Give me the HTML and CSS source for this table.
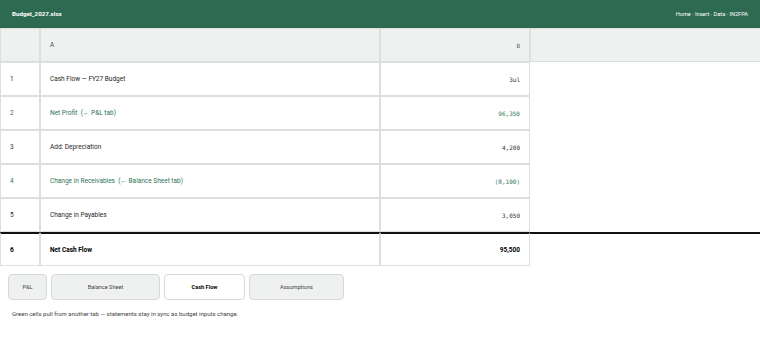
FILE: index.html
```html
<!DOCTYPE html>
<html>
<head>
<meta charset="utf-8">
<link rel="stylesheet" href="styles.css">
</head>
<body>
<header class="topbar">
  <span class="file">Budget_2027.xlsx</span>
  <span class="menu">Home · Insert · Data · IN2FPA</span>
</header>
<div class="sheet">
  <div class="cell head"></div>
  <div class="cell head txt">A</div>
  <div class="cell head num">B</div>
  <div class="cell head fill"></div>

  <div class="cell rn">1</div>
  <div class="cell txt">Cash Flow — FY27 Budget</div>
  <div class="cell num">3ul</div>
  <div class="blank"></div>

  <div class="cell rn link">2</div>
  <div class="cell txt link">Net Profit &nbsp;(← P&amp;L tab)</div>
  <div class="cell num link">96,350</div>
  <div class="blank"></div>

  <div class="cell rn">3</div>
  <div class="cell txt">Add: Depreciation</div>
  <div class="cell num">4,200</div>
  <div class="blank"></div>

  <div class="cell rn link">4</div>
  <div class="cell txt link">Change in Receivables &nbsp;(← Balance Sheet tab)</div>
  <div class="cell num link">(8,100)</div>
  <div class="blank"></div>

  <div class="cell rn">5</div>
  <div class="cell txt">Change in Payables</div>
  <div class="cell num">3,050</div>
  <div class="blank"></div>

  <div class="cell rn total">6</div>
  <div class="cell txt total">Net Cash Flow</div>
  <div class="cell num total sum">95,500</div>
  <div class="blank total"></div>
</div>
<nav class="tabs">
  <div class="tab tab-pl">P&amp;L</div>
  <div class="tab tab-bs">Balance Sheet</div>
  <div class="tab tab-cf active">Cash Flow</div>
  <div class="tab tab-as">Assumptions</div>
</nav>
<p class="note">Green cells pull from another tab — statements stay in sync as budget inputs change.</p>
</body>
</html>
```
FILE: styles.css
```css
html, body {
  margin: 0;
  padding: 0;
  background: #ffffff;
  font-family: Roboto, "Noto Sans", sans-serif;
  font-size: 6.5px;
  color: #1f1f1f;
}
.topbar {
  height: 28px;
  background: #2e6a52;
  color: #ffffff;
  display: flex;
  align-items: center;
  justify-content: space-between;
  padding: 0 12px;
}
.file {
  font-weight: 700;
  font-size: 6.2px;
}
.menu {
  font-size: 5.6px;
}
.sheet {
  display: grid;
  grid-template-columns: 40px 340px 150px 1fr;
  grid-auto-rows: 34px;
}
.cell {
  border: 1px solid #dbe0dd;
  display: flex;
  align-items: center;
  padding: 0 9px;
  background: #fff;
}
.head {
  background: #eef1ef;
  color: #555;
}
.head.fill {
  border-right: none;
}
.blank {
  background: #fff;
}
.txt {
  justify-content: flex-start;
}
.num {
  justify-content: flex-end;
  font-family: "DejaVu Sans Mono", "Liberation Mono", monospace;
  font-size: 6px;
  color: #333;
}
.head.num {
  color: #666;
}
.rn {
  color: #333;
}
.link {
  color: #2f7357;
}
.num.link {
  color: #2f7357;
}
.total {
  border-top: 2px solid #111;
  font-weight: 700;
  color: #000;
}
.sum {
  font-family: Roboto, "Noto Sans", sans-serif;
  font-size: 6.5px;
}
.tabs {
  display: flex;
  gap: 4px;
  padding: 8px 8px 0 8px;
}
.tab {
  height: 26px;
  box-sizing: border-box;
  display: flex;
  align-items: center;
  justify-content: center;
  background: #eef1ef;
  border: 1px solid #d5dad7;
  border-radius: 4px;
  color: #444;
  font-size: 5.6px;
}
.tab-pl { width: 39px; }
.tab-bs { width: 109px; }
.tab-cf { width: 81px; }
.tab-as { width: 95px; }
.tab.active {
  background: #fff;
  color: #000;
  font-weight: 700;
}
.note {
  margin: 10px 12px 0 12px;
  font-size: 6px;
  color: #444;
}
```
